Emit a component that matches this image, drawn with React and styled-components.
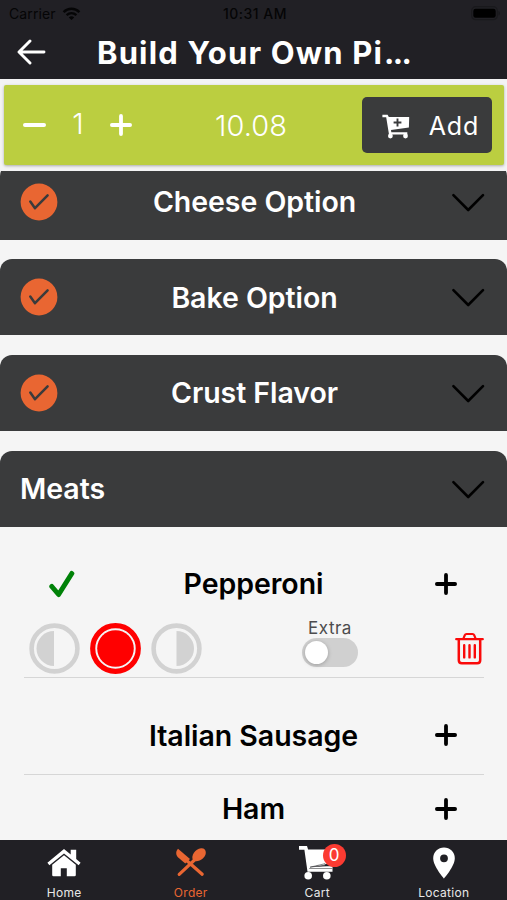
import React, { useState } from "react";
import styled, { createGlobalStyle } from "styled-components";

const sections = ["Cheese Option", "Bake Option", "Crust Flavor"];

const WifiIcon = () => (
  <svg width="19" height="14" viewBox="0 0 19 14" fill="none" stroke="#050506">
    <path d="M1.6 5.1c4.5-4.4 11.3-4.4 15.8 0" strokeWidth="2.5" />
    <path d="M4.6 8.2c2.9-2.7 6.9-2.7 9.8 0" strokeWidth="2.3" />
    <path d="M6.8 10.4c1.7-1.4 3.7-1.4 5.4 0L9.5 13z" fill="#050506" stroke="none" />
  </svg>
);

const BatteryIcon = () => (
  <svg width="30" height="15" viewBox="0 0 30 15">
    <rect x=".7" y=".7" width="25.6" height="13" rx="4" fill="none" stroke="#19191c" strokeWidth="1.2" />
    <rect x="2.3" y="2.7" width="22.4" height="9" rx="2.2" fill="#000" />
    <path d="M27.6 5v4.6c1.5-.6 1.5-4 0-4.6" fill="#151518" />
  </svg>
);

const BackIcon = () => (
  <svg width="30" height="26" viewBox="0 0 30 26" fill="none" stroke="#fff" strokeWidth="2.9" strokeLinecap="round" strokeLinejoin="round">
    <path d="M13 2L2 13l11 11M2.5 13H27" />
  </svg>
);

const PlusIcon = ({ color = "#000" }) => (
  <svg width="22" height="22" viewBox="0 0 22 22" stroke={color} strokeWidth="3.8" strokeLinecap="round">
    <path d="M1.9 11h18.2M11 1.9v18.2" />
  </svg>
);

const MinusIcon = () => (
  <svg width="23" height="22" viewBox="0 0 23 22" stroke="#fff" strokeWidth="4" strokeLinecap="round">
    <path d="M2 11h19" />
  </svg>
);

const AddCartIcon = () => (
  <svg width="28" height="25" viewBox="0 0 28 25" fill="#fff">
    <path d="M.4.8h5.2l1.2 2.1h20.4l-.3 10.6L9 15.9l.3 2.3h16v2.2H7L4.2 3.2H.4z" />
    <circle cx="8.4" cy="22" r="2.4" />
    <circle cx="23.5" cy="22" r="2.4" />
    <path d="M15.5 4.6v7.8M11.6 8.5h7.8" stroke="#3a3b3c" strokeWidth="1.9" />
  </svg>
);

const DoneIcon = () => (
  <svg width="38" height="38" viewBox="0 0 38 38">
    <circle cx="19" cy="19" r="18.4" fill="#e96632" />
    <path d="M10.3 18.6l4.7 6.6L27.6 12.3" fill="none" stroke="#3a3b3c" strokeWidth="2.5" strokeLinecap="round" strokeLinejoin="round" />
  </svg>
);

const ChevronIcon = () => (
  <svg width="34" height="20" viewBox="0 0 34 20" fill="none" stroke="#000" strokeWidth="2.6" strokeLinecap="round" strokeLinejoin="round">
    <path d="M2.4 3.2L17.2 18 32 3.2" />
  </svg>
);

const TickIcon = () => (
  <svg width="26" height="28" viewBox="0 0 26 28" fill="none" stroke="#008208" strokeWidth="5" strokeLinecap="round" strokeLinejoin="round">
    <path d="M2.8 16.5l6.8 8L22.8 3.5" />
  </svg>
);

const PortionIcon = ({ side, active }) => (
  <svg width="51" height="51" viewBox="0 0 51 51">
    <circle cx="25.5" cy="25.5" r={active ? 22.8 : 22.9} fill="none" stroke={active ? "#f00" : "#d2d2d2"} strokeWidth={active ? 5.2 : 4.6} />
    {side === "left" && <path d="M25 8v35a17.5 17.5 0 010-35" fill="#d2d2d2" />}
    {side === "right" && <path d="M25.5 8v35a17.5 17.5 0 000-35" fill="#d2d2d2" />}
    {side === "whole" && <circle cx="25.5" cy="25.5" r="18.3" fill="#f00" />}
  </svg>
);

const TrashIcon = () => (
  <svg width="29" height="33" viewBox="0 0 29 33" fill="none" stroke="#fa0a0a" strokeLinecap="round" strokeLinejoin="round">
    <path d="M1.2 7.2h26.6M8.4 6.6l1.4-3.4Q10.3 2 11.5 2h6q1.2 0 1.7 1.2l1.4 3.4" strokeWidth="2.2" />
    <path d="M3.8 7.7v20.6q0 3 3 3h15.4q3 0 3-3V7.7" strokeWidth="2.5" />
    <path d="M9.2 13.3v12.1M14.5 13.3v12.1M19.8 13.3v12.1" strokeWidth="2.4" />
  </svg>
);

const HomeIcon = () => (
  <svg width="34" height="28" viewBox="0 0 34 28" fill="#fff">
    <path d="M17 0L.4 13.8l2 2.4L17 4.4l14.6 11.8 2-2.4-4.4-3.7V.7h-5.5v4.9z" />
    <path d="M17 6.3L5.2 15.8v10.1q0 1.3 1.3 1.3h7.3v-8h6v8h7.7q1.3 0 1.3-1.3V15.8z" />
  </svg>
);

const OrderIcon = () => (
  <svg width="32" height="29" viewBox="0 0 32 29">
    <path d="M3 .8l12 10.3-4.7 4.3L3.2 9.6C1.1 7.6.2 3.8 3 .8" fill="#e96632" />
    <path d="M10.8 11.7L27.2 26.3M4.2 26.3L20.6 11" stroke="#e96632" strokeWidth="3.2" strokeLinecap="round" />
    <path d="M18 12.2C15.5 7.6 20.4 1 26 .3c3-.3 5 1.8 4.8 4.7C30.2 10.8 22.5 15.2 18 12.2" fill="#e96632" />
  </svg>
);

const CartIcon = () => (
  <svg width="37" height="34" viewBox="0 0 37 34" fill="#fff">
    <path d="M0 0h8l1.1 3.6H36v13L11.5 21l16.5-.8h5.5v5.5H8.5L5.4 3.8H0z" />
    <path d="M11 21.2l15-3.5v1.5zM10.2 22.5h23" stroke="#1f1e23" strokeWidth=".5" />
    <circle cx="9.2" cy="29.8" r="3.8" />
    <circle cx="27.8" cy="29.8" r="3.8" />
  </svg>
);

const PinIcon = () => (
  <svg width="22" height="32" viewBox="0 0 22 32">
    <path fill="#fff" fillRule="evenodd" d="M11 .4A10.8 10.8 0 00.2 11.2C.2 19.3 11 31.5 11 31.5s10.8-12.2 10.8-20.3A10.8 10.8 0 0011 .4m0 7a3.9 3.9 0 110 7.8 3.9 3.9 0 010-7.8" />
  </svg>
);

const App = () => {
  const [portion, setPortion] = useState("whole");

  return (
    <Screen>
      <GlobalStyle />
      <StatusBar>
        <Carrier>
          <span>Carrier</span>
          <WifiIcon />
        </Carrier>
        <Clock>10:31 AM</Clock>
        <BatteryIcon />
      </StatusBar>
      <Header>
        <BackIcon />
        <Title>
          Build Your Own Pi<Dots>...</Dots>
        </Title>
      </Header>

      <OrderWrap>
        <OrderBar>
          <Quantity>
            <MinusIcon />
            <Count>1</Count>
            <PlusIcon color="#fff" />
          </Quantity>
          <Price>10.08</Price>
          <AddButton>
            <AddCartIcon />
            <span>Add</span>
          </AddButton>
        </OrderBar>
      </OrderWrap>

      <Content>
        {sections.map((name) => (
          <Section key={name}>
            <DoneIcon />
            <SectionName>{name}</SectionName>
            <ChevronIcon />
          </Section>
        ))}
        <Section $open>
          <SectionName>Meats</SectionName>
          <ChevronIcon />
        </Section>

        <Item $height={114}>
          <TickIcon />
          <ItemName>Pepperoni</ItemName>
          <PlusIcon />
        </Item>
        <Options>
          <Portions>
            {["left", "whole", "right"].map((side) => (
              <PortionButton key={side} onClick={() => setPortion(side)}>
                <PortionIcon side={side} active={portion === side} />
              </PortionButton>
            ))}
          </Portions>
          <Extra>
            <ExtraLabel>Extra</ExtraLabel>
            <Toggle>
              <Knob />
            </Toggle>
          </Extra>
          <TrashIcon />
        </Options>
        <Divider />
        <Item $height={115}>
          <span />
          <ItemName>Italian Sausage</ItemName>
          <PlusIcon />
        </Item>
        <Divider $raised />
        <Item $height={68}>
          <span />
          <ItemName>Ham</ItemName>
          <PlusIcon />
        </Item>
      </Content>

      <TabBar>
        <Tab>
          <TabIcon><HomeIcon /></TabIcon>
          <span>Home</span>
        </Tab>
        <Tab $active>
          <TabIcon><OrderIcon /></TabIcon>
          <span>Order</span>
        </Tab>
        <Tab>
          <TabIcon>
            <CartIcon />
            <Badge>0</Badge>
          </TabIcon>
          <span>Cart</span>
        </Tab>
        <Tab>
          <TabIcon><PinIcon /></TabIcon>
          <span>Location</span>
        </Tab>
      </TabBar>
    </Screen>
  );
};
export default App;

const GlobalStyle = createGlobalStyle`
  * {
    box-sizing: border-box;
  }
  body {
    margin: 0;
  }
  svg {
    display: block;
    flex-shrink: 0;
  }
  button {
    border: 0;
    padding: 0;
    background: none;
    font-family: inherit;
  }
`;
const Screen = styled.div`
  display: flex;
  flex-direction: column;
  width: 507px;
  height: 900px;
  overflow: hidden;
  background: #f5f5f5;
  font-family: Inter, "Liberation Sans", sans-serif;
`;
const StatusBar = styled.div`
  display: grid;
  grid-template-columns: 1fr auto 1fr;
  align-items: center;
  height: 27px;
  padding: 0 6px 0 9px;
  background: #212025;
  color: #050506;
  font-size: 14px;
  > svg {
    justify-self: end;
  }
`;
const Carrier = styled.div`
  display: flex;
  align-items: center;
  gap: 6px;
  letter-spacing: 0.1px;
`;
const Clock = styled.span`
  font-weight: 500;
  letter-spacing: 0.5px;
`;
const Header = styled.div`
  display: flex;
  align-items: center;
  height: 52px;
  padding: 0 0 2px 17px;
  background: #212025;
`;
const Title = styled.h1`
  margin: 0 0 0 50px;
  color: #ffffff;
  font-size: 31px;
  font-weight: 700;
  letter-spacing: 1.15px;
  white-space: nowrap;
`;
const Dots = styled.span`
  margin-left: 1px;
  letter-spacing: -1.6px;
`;
const OrderWrap = styled.div`
  height: 92px;
  padding: 6px 3px 6px 4px;
  background: #f3f3f4;
`;
const OrderBar = styled.div`
  display: flex;
  align-items: center;
  height: 80px;
  padding: 0 12px 0 19px;
  border-radius: 2px;
  background: #bbce40;
  box-shadow: 0 1px 3px rgba(0, 0, 0, 0.3);
  color: #ffffff;
`;
const Quantity = styled.div`
  display: flex;
  align-items: center;
  width: 192px;
`;
const Count = styled.span`
  width: 64px;
  padding-bottom: 4px;
  font-size: 29px;
  font-weight: 300;
  text-align: center;
`;
const Price = styled.span`
  flex: 1;
  font-size: 29px;
  font-weight: 300;
  letter-spacing: 0.1px;
`;
const AddButton = styled.button`
  display: flex;
  align-items: center;
  justify-content: space-between;
  width: 130px;
  height: 56px;
  padding: 2px 13px 0 20px;
  border-radius: 5px;
  background: #3a3b3c;
  color: #ffffff;
  font-size: 25px;
  letter-spacing: 0.8px;
`;
const Content = styled.div`
  flex: 1;
  overflow: hidden;
  display: flex;
  flex-direction: column;
  > * {
    flex-shrink: 0;
  }
  > :first-child {
    margin-top: -7.5px;
  }
`;
const Section = styled.div`
  display: flex;
  align-items: center;
  justify-content: space-between;
  height: 76px;
  margin-bottom: ${(props) => (props.$open ? 0 : "19.7px")};
  padding: 0 22px 0 20px;
  border-radius: 12px 12px 0 0;
  background: #3a3b3c;
`;
const SectionName = styled.span`
  color: #ffffff;
  font-size: 28.5px;
  font-weight: 600;
  letter-spacing: -0.05px;
`;
const Item = styled.div`
  display: grid;
  grid-template-columns: 60px 1fr 60px;
  align-items: center;
  flex-shrink: 0;
  height: ${(props) => props.$height}px;
  padding: 0 38px;
  > svg {
    justify-self: center;
  }
  > svg:first-child {
    margin-left: -13px;
  }
  > svg:last-child {
    margin-right: -14px;
  }
`;
const ItemName = styled.span`
  color: #000000;
  font-size: 28.5px;
  font-weight: 600;
  letter-spacing: -0.05px;
  text-align: center;
`;
const Options = styled.div`
  display: flex;
  align-items: center;
  justify-content: space-between;
  height: 57px;
  margin-top: -21px;
  padding: 0 23px 0 29px;
`;
const Portions = styled.div`
  display: flex;
  gap: 10px;
`;
const PortionButton = styled.button`
  width: 51px;
  height: 51px;
`;
const Extra = styled.div`
  display: flex;
  flex-direction: column;
  align-items: center;
  padding: 0 0 11px 3px;
`;
const ExtraLabel = styled.span`
  color: #4c4c4e;
  font-size: 17px;
  line-height: 20px;
  letter-spacing: 0.5px;
`;
const Toggle = styled.div`
  display: flex;
  align-items: center;
  width: 56px;
  height: 29px;
  padding: 0 3px;
  border-radius: 15px;
  background: #d0d0d0;
`;
const Knob = styled.div`
  width: 23px;
  height: 23px;
  border-radius: 50%;
  background: #ffffff;
  box-shadow: 0 1px 4px rgba(0, 0, 0, 0.25);
`;
const Divider = styled.div`
  height: 1px;
  margin: ${(props) => (props.$raised ? "-19px" : 0)} 23px 0 24px;
  background: #d6d6d6;
`;
const TabBar = styled.div`
  display: grid;
  grid-template-columns: repeat(4, 1fr);
  height: 60px;
  padding-left: 1px;
  background: #212025;
`;
const Tab = styled.div`
  display: flex;
  flex-direction: column;
  align-items: center;
  color: ${(props) => (props.$active ? "#e96632" : "#e8e8e8")};
  font-size: 12px;
  line-height: 15px;
  letter-spacing: 0.3px;
`;
const TabIcon = styled.div`
  position: relative;
  display: flex;
  align-items: center;
  height: 45px;
`;
const Badge = styled.span`
  position: absolute;
  top: 4px;
  right: -10px;
  width: 23px;
  height: 23px;
  border-radius: 50%;
  background: #fb3b32;
  color: #ffffff;
  font-size: 17px;
  line-height: 23px;
  text-align: center;
`;
